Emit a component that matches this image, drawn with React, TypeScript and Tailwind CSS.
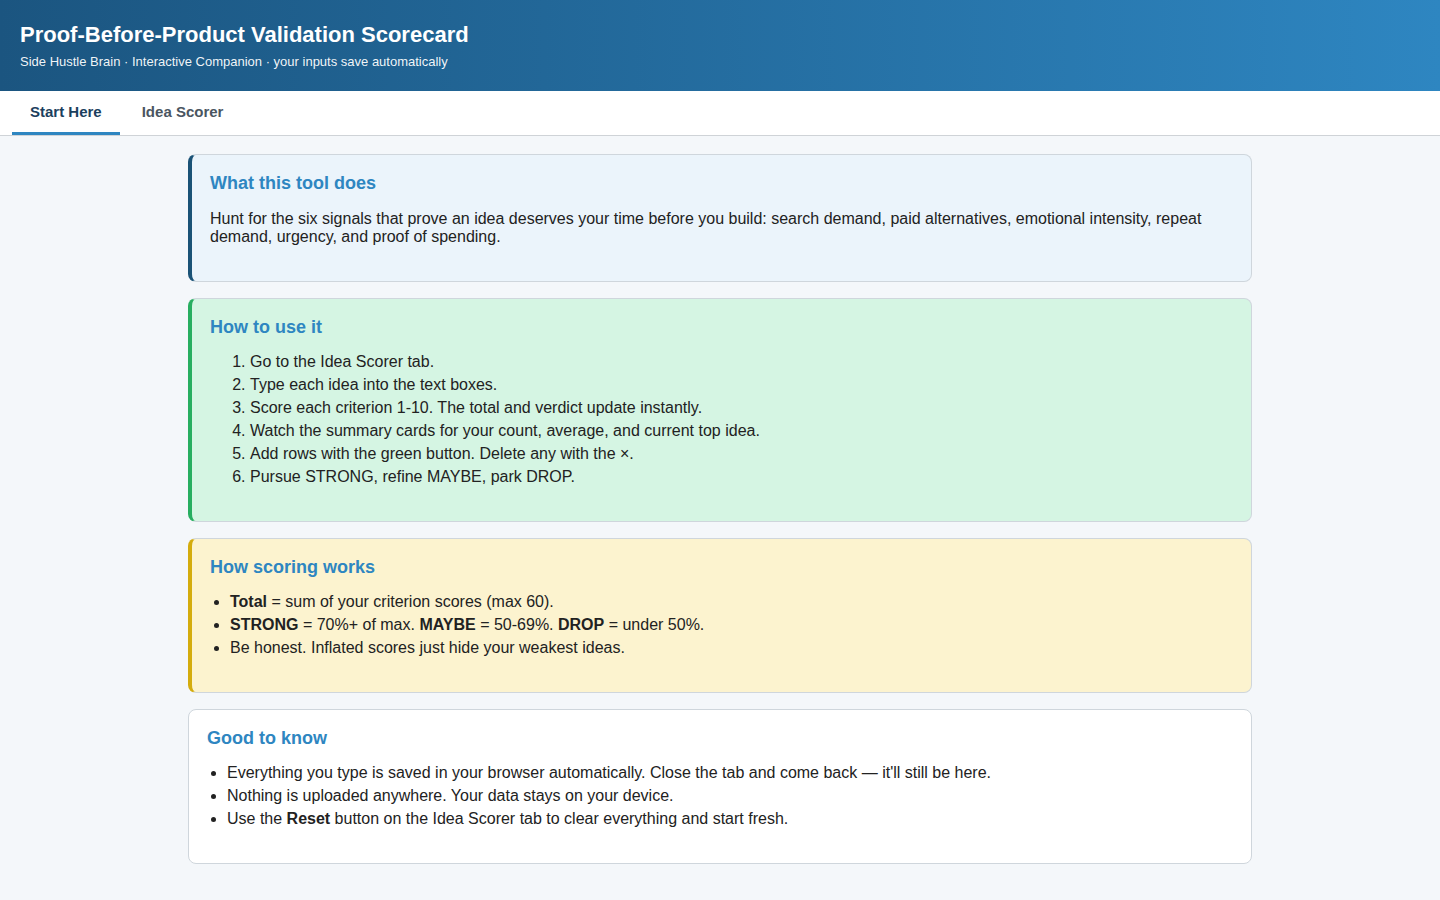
import React from "react";

const font = { fontFamily: '"Liberation Sans", Arial, Helvetica, sans-serif' };

function Card({
  title,
  accent,
  children,
}: {
  title: string;
  accent: string;
  children: React.ReactNode;
}) {
  return (
    <section className={`rounded-[8px] border border-[#cfd6dc] px-[18px] pt-[18px] pb-[30px] ${accent}`}>
      <h3 className="mb-[16px] text-[18px] leading-[20px] font-bold text-[#2e86c1]">{title}</h3>
      {children}
    </section>
  );
}

export default function App() {
  return (
    <div style={font} className="min-h-[900px] bg-[#f4f7fa] text-[#222]">
      {/* Header */}
      <header className="h-[91px] bg-gradient-to-r from-[#1b5580] to-[#2e86c1] px-5 pt-[22px] text-white">
        <h1 className="text-[22px] leading-[26px] font-bold">Proof-Before-Product Validation Scorecard</h1>
        <p className="mt-[6px] text-[13px] leading-[15px] text-white/95">
          Side Hustle Brain · Interactive Companion · your inputs save automatically
        </p>
      </header>

      {/* Tabs */}
      <nav className="flex h-[45px] items-stretch border-b border-[#cfd3d7] bg-white px-3">
        <button className="border-b-[3px] border-[#2e86c1] px-[18px] pt-[1px] text-[15px] font-bold text-[#1c3f5e]">
          Start Here
        </button>
        <button className="border-b-[3px] border-transparent px-[22px] pt-[1px] text-[15px] font-bold text-[#4a5561]">
          Idea Scorer
        </button>
      </nav>

      {/* Content */}
      <main className="mx-auto flex w-[1064px] flex-col gap-[16px] pt-[18px] pb-10 text-[16px] leading-[18px]">
        <Card title="What this tool does" accent="border-l-4 border-l-[#1a5276] bg-[#ebf4fb]">
          <p className="mb-[5px] pt-[1px]">
            Hunt for the six signals that prove an idea deserves your time before you build: search demand, paid
            alternatives, emotional intensity, repeat demand, urgency, and proof of spending.
          </p>
        </Card>

        <Card title="How to use it" accent="border-l-4 border-l-[#27ae60] bg-[#d5f5e3]">
          <ol className="list-decimal pl-10">
            <li className="mb-[5px]">Go to the Idea Scorer tab.</li>
            <li className="mb-[5px]">Type each idea into the text boxes.</li>
            <li className="mb-[5px]">Score each criterion 1-10. The total and verdict update instantly.</li>
            <li className="mb-[5px]">Watch the summary cards for your count, average, and current top idea.</li>
            <li className="mb-[5px]">Add rows with the green button. Delete any with the ×.</li>
            <li className="mb-[5px]">Pursue STRONG, refine MAYBE, park DROP.</li>
          </ol>
        </Card>

        <Card title="How scoring works" accent="border-l-4 border-l-[#d4ac0d] bg-[#fcf3cf]">
          <ul className="list-disc pl-5">
            <li className="mb-[5px]">
              <b>Total</b> = sum of your criterion scores (max 60).
            </li>
            <li className="mb-[5px]">
              <b>STRONG</b> = 70%+ of max. <b>MAYBE</b> = 50-69%. <b>DROP</b> = under 50%.
            </li>
            <li className="mb-[5px]">Be honest. Inflated scores just hide your weakest ideas.</li>
          </ul>
        </Card>

        <Card title="Good to know" accent="bg-white">
          <ul className="list-disc pl-5">
            <li className="mb-[5px]">
              Everything you type is saved in your browser automatically. Close the tab and come back — it'll still be
              here.
            </li>
            <li className="mb-[5px]">Nothing is uploaded anywhere. Your data stays on your device.</li>
            <li className="mb-[5px]">
              Use the <b>Reset</b> button on the Idea Scorer tab to clear everything and start fresh.
            </li>
          </ul>
        </Card>
      </main>
    </div>
  );
}
